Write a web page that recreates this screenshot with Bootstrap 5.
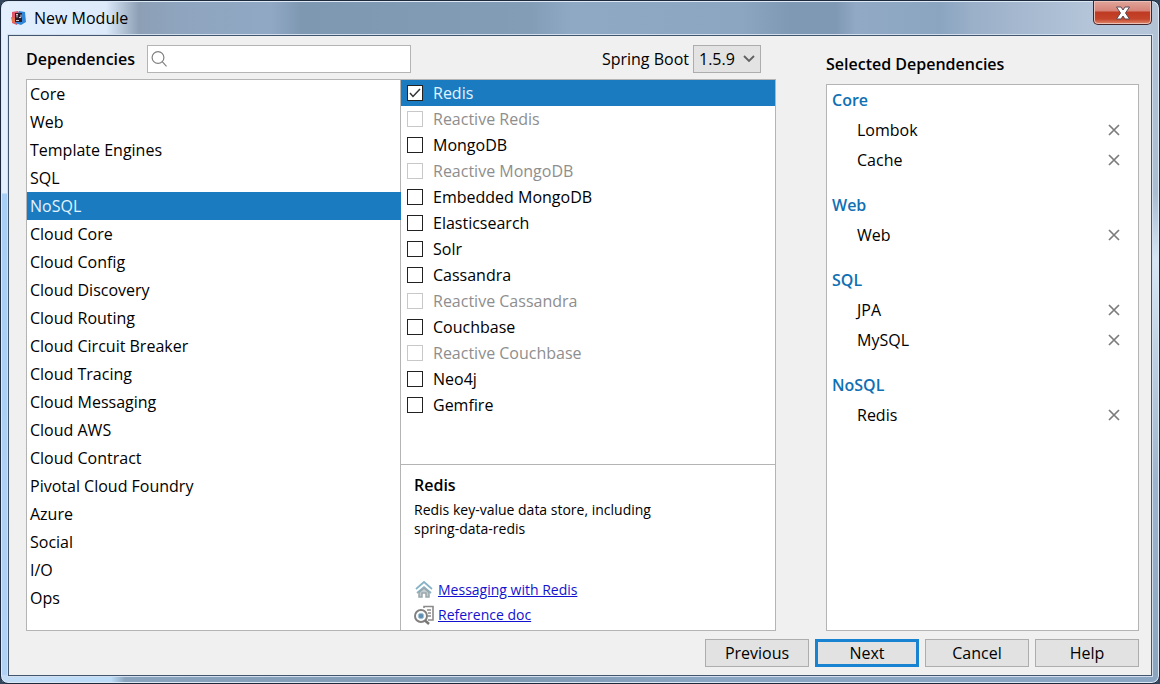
<!DOCTYPE html>
<html lang="en">
<head>
<meta charset="utf-8">
<meta name="viewport" content="width=device-width, initial-scale=1">
<title>New Module</title>
<link rel="stylesheet" href="https://cdn.jsdelivr.net/npm/bootstrap@5.3.0/dist/css/bootstrap.min.css">
<style>
:root { --line: #b4b4b4; --pick: #1a7bc0; }
body { font-family: "Open Sans", "Noto Sans", sans-serif; font-size: 16px; line-height: 20px; color: #000; background: #34465c; }
.strong-text { font-weight: 600; }
.window {
  border: 1px solid #1d2a3e; border-radius: 8px; padding: 0 7px 7px;
  box-shadow: inset 0 0 0 1px #dce8f4;
  background:
    linear-gradient(90deg, #c3dcf6, #bcdcf8 110px, #8ba4be 124px, #7f99b3 500px, #8ba6c2 700px, #8ba6c2) bottom / 100% 8px no-repeat,
    linear-gradient(#e4f0fd 192px, #a8cff5 193px, #b2d2f4) left / 8px 100% no-repeat,
    linear-gradient(#b4c4d6, #a9bdd2 192px, #d6e6f5 260px, #9db5cc 480px, #8aa4be) right / 8px 100% no-repeat,
    linear-gradient(90deg, #e3effd, #dceafa 105px, #8c9fb5 138px, #8fa5bf 180px, #90a8c4 270px, #7f98b2 300px, #839db7 530px, #8fa8c4 570px, #8ca6c2 740px, #7f98b3 790px, #7f98b3 835px, #91a9c4 855px, #8ba5c1 940px, #9aafc8 970px, #b4c5d9 1090px, #b4c5d9);
}
.title-bar { height: 34px; padding-left: 3px; }
.title-bar .caption { margin-left: 7px; }
.close-win {
  width: 59px; height: 24px; border: 1px solid #43242b; border-top: 0; border-radius: 0 0 5px 5px;
  background: linear-gradient(#e0a59b, #d68377 10px, #bf3a22 11px, #c4442a 18px, #e08a6e);
  box-shadow: inset 0 0 0 1px #ecc0b6;
}
.client { border: 1px solid #43566f; background: #f0f0f0; padding: 9px 12px 8px 17px; box-shadow: 0 0 0 1px #d3dfec; }
.pane-main { flex: 750 1 0; min-width: 0; }
.pane-side { flex: 313 1 0; min-width: 0; }
.panes { gap: 50px; }
.tools { height: 28px; margin-bottom: 6px; }
.tools .find-label { width: 121px; }
.search-box { width: 264px; }
.search-box svg { left: 4px; top: 6px; }
.search-box .form-control { height: 28px; border: 1px solid var(--line); border-radius: 0; padding: 0 4px 0 26px; font-size: 16px; }
.version { width: 68px; height: 28px; margin-right: 15px; padding: 0 18px 0 5px; font-size: 16px; line-height: 20px; color: #000; border: 1px solid #adadad; border-radius: 0; background-color: #e3e3e3; background-position: right 5px center; background-size: 12px 12px;
  background-image: url("data:image/svg+xml,%3csvg xmlns='http://www.w3.org/2000/svg' viewBox='0 0 12 12'%3e%3cpath fill='none' stroke='%23606060' stroke-width='1.8' d='M1 3l5 5 5-5'/%3e%3c/svg%3e"); }
.sheet { border: 1px solid var(--line); background: #fff; }
.split > * { flex: 1 1 0; min-width: 0; }
.split > * + * { box-shadow: -1px 0 var(--line); }
.groups .list-group-item { height: 28px; border: 0; padding: 4px 3px; color: #000; background: none; }
.groups .list-group-item.active { background: var(--pick); color: #e2f3ff; margin: 0; }
.option { height: 26px; padding-left: 6px; margin: 0; }
.option .form-check-input { float: none; width: 16px; height: 16px; margin: 0 10px 0 0; border: 1px solid #222; border-radius: 0; flex: none; opacity: 1; background-color: #fff; }
.option .form-check-input:checked { background-size: 14px 14px; background-image: url("data:image/svg+xml,%3csvg xmlns='http://www.w3.org/2000/svg' viewBox='0 0 14 14'%3e%3cpath fill='none' stroke='%23333' stroke-width='1.5' d='M2 7l3 3.5L12 3'/%3e%3c/svg%3e"); }
.option .form-check-input:disabled { border-color: #c8c8c8; }
.option .form-check-input:disabled ~ .form-check-label { color: #8e8e8e; opacity: 1; }
.option.picked { background: var(--pick); color: #e2f3ff; }
.about { height: 166px; border-top: 1px solid var(--line); padding: 10px 13px 3px; }
.about p { max-width: 270px; font-size: 14px; line-height: 19px; margin: 5px 0 0; }
.about a { font-size: 14px; color: #1212d0; }
.about .doc-link { height: 25px; gap: 4px; }
.side-title { height: 20px; margin: 9px 0 10px; }
.side-title, .tools label, .about h2 { font-size: 16px; line-height: 20px; }
.chosen { padding-bottom: 15px; }
.chosen h3 { height: 30px; margin: 0; padding: 5px; font-size: 16px; line-height: 20px; color: #0f70b4; }
.chosen li { height: 30px; padding: 0 17px 0 30px; }
.drop { width: 14px; height: 14px; }
.actions { gap: 6px; margin-top: 8px; }
.actions .btn { width: 104px; height: 28px; padding: 0; border: 1px solid #adadad; border-radius: 0; background: #e2e2e2; color: #000; font-size: 16px; line-height: 20px; }
.actions .btn.main-step { border: 3px solid #1883d0; }
</style>
</head>
<body>
<div class="window d-flex flex-column min-vh-100">
  <header class="title-bar d-flex align-items-center">
    <svg width="16" height="16" viewBox="0 0 16 16" aria-hidden="true">
      <path fill="#e0566a" d="M1 2l6-1 3 5-4 9-5-2z"/><path fill="#2f86d8" d="M8 1l6 1 1 10-5 3-6-2z"/><path fill="#e8704a" d="M0 7l4 1v5l-3-1z"/>
      <path fill="#2a1c28" d="M4 3h7v9H4z"/><path stroke="#d8ccd4" fill="none" d="M5 4.500h2M6 4.500v3M8 7.500h2v-3M5 10.500h3"/>
    </svg>
    <span class="caption">New Module</span>
    <button class="close-win ms-auto p-0 align-self-start d-flex align-items-center justify-content-center" type="button" aria-label="Close">
      <svg width="16" height="14" viewBox="0 0 16 14"><path d="M1.500 1h4.500L8 4l2-3h4.500l-4 6 4 6H10L8 10l-2 3H1.500l4-6z" fill="#fff" stroke="#5c4a55"/></svg>
    </button>
  </header>

  <main class="client d-flex flex-column flex-grow-1">
    <div class="panes d-flex flex-grow-1">
      <section class="pane-main d-flex flex-column">
        <div class="tools d-flex align-items-center">
          <label class="find-label strong-text" for="find">Dependencies</label>
          <div class="search-box position-relative">
            <svg class="position-absolute" width="16" height="16" viewBox="0 0 16 16" fill="none" stroke="#808080" stroke-width="1.200" aria-hidden="true"><circle cx="7" cy="6.500" r="5.900"/><path d="M11.200 10.700l4.300 4.600"/></svg>
            <input class="form-control" id="find" type="text">
          </div>
          <label class="ms-auto me-1" for="boot">Spring Boot</label>
          <select class="version form-select" id="boot"><option>1.5.9</option></select>
        </div>
        <div class="sheet split d-flex flex-grow-1">
          <div class="groups list-group list-group-flush">
            <a href="#" class="list-group-item">Core</a>
            <a href="#" class="list-group-item">Web</a>
            <a href="#" class="list-group-item">Template Engines</a>
            <a href="#" class="list-group-item">SQL</a>
            <a href="#" class="list-group-item active">NoSQL</a>
            <a href="#" class="list-group-item">Cloud Core</a>
            <a href="#" class="list-group-item">Cloud Config</a>
            <a href="#" class="list-group-item">Cloud Discovery</a>
            <a href="#" class="list-group-item">Cloud Routing</a>
            <a href="#" class="list-group-item">Cloud Circuit Breaker</a>
            <a href="#" class="list-group-item">Cloud Tracing</a>
            <a href="#" class="list-group-item">Cloud Messaging</a>
            <a href="#" class="list-group-item">Cloud AWS</a>
            <a href="#" class="list-group-item">Cloud Contract</a>
            <a href="#" class="list-group-item">Pivotal Cloud Foundry</a>
            <a href="#" class="list-group-item">Azure</a>
            <a href="#" class="list-group-item">Social</a>
            <a href="#" class="list-group-item">I/O</a>
            <a href="#" class="list-group-item">Ops</a>
          </div>
          <div class="d-flex flex-column">
            <div class="flex-grow-1">
              <div class="option picked form-check d-flex align-items-center"><input class="form-check-input" type="checkbox" id="o1" checked><label class="form-check-label" for="o1">Redis</label></div>
              <div class="option form-check d-flex align-items-center"><input class="form-check-input" type="checkbox" id="o2" disabled><label class="form-check-label" for="o2">Reactive Redis</label></div>
              <div class="option form-check d-flex align-items-center"><input class="form-check-input" type="checkbox" id="o3"><label class="form-check-label" for="o3">MongoDB</label></div>
              <div class="option form-check d-flex align-items-center"><input class="form-check-input" type="checkbox" id="o4" disabled><label class="form-check-label" for="o4">Reactive MongoDB</label></div>
              <div class="option form-check d-flex align-items-center"><input class="form-check-input" type="checkbox" id="o5"><label class="form-check-label" for="o5">Embedded MongoDB</label></div>
              <div class="option form-check d-flex align-items-center"><input class="form-check-input" type="checkbox" id="o6"><label class="form-check-label" for="o6">Elasticsearch</label></div>
              <div class="option form-check d-flex align-items-center"><input class="form-check-input" type="checkbox" id="o7"><label class="form-check-label" for="o7">Solr</label></div>
              <div class="option form-check d-flex align-items-center"><input class="form-check-input" type="checkbox" id="o8"><label class="form-check-label" for="o8">Cassandra</label></div>
              <div class="option form-check d-flex align-items-center"><input class="form-check-input" type="checkbox" id="o9" disabled><label class="form-check-label" for="o9">Reactive Cassandra</label></div>
              <div class="option form-check d-flex align-items-center"><input class="form-check-input" type="checkbox" id="o10"><label class="form-check-label" for="o10">Couchbase</label></div>
              <div class="option form-check d-flex align-items-center"><input class="form-check-input" type="checkbox" id="o11" disabled><label class="form-check-label" for="o11">Reactive Couchbase</label></div>
              <div class="option form-check d-flex align-items-center"><input class="form-check-input" type="checkbox" id="o12"><label class="form-check-label" for="o12">Neo4j</label></div>
              <div class="option form-check d-flex align-items-center"><input class="form-check-input" type="checkbox" id="o13"><label class="form-check-label" for="o13">Gemfire</label></div>
            </div>
            <div class="about d-flex flex-column">
              <h2 class="strong-text m-0">Redis</h2>
              <p>Redis key-value data store, including spring-data-redis</p>
              <div class="mt-auto">
                <div class="doc-link d-flex align-items-center">
                  <svg width="20" height="20" viewBox="0 0 20 20" fill="none" aria-hidden="true"><path d="M2 9l8-7 8 7M3 13l7-6 7 6" stroke="#86b4c6" stroke-width="1.700"/><path d="M5 17v-4.500L10 8l5 4.500V17h-3v-4H8v4z" fill="#c3ccd0" stroke="#9aa6ab" stroke-width="1.500"/></svg>
                  <a href="#">Messaging with Redis</a>
                </div>
                <div class="doc-link d-flex align-items-center">
                  <svg width="20" height="20" viewBox="0 0 20 20" fill="none" aria-hidden="true"><path d="M10 3V1.500h9V15h-5M13 5h4M14 8h3M14 11h3" stroke="#8a8a8a" stroke-width="1.600"/><circle cx="7" cy="11" r="6" fill="#fff" stroke="#808080" stroke-width="2"/><circle cx="7" cy="11" r="2.800" fill="#5d8db0" stroke="#a4c4d8"/><path d="M11 15.500l4 3.500" stroke="#777" stroke-width="2.500"/></svg>
                  <a href="#">Reference doc</a>
                </div>
              </div>
            </div>
          </div>
        </div>
      </section>

      <section class="pane-side d-flex flex-column">
        <h2 class="side-title strong-text">Selected Dependencies</h2>
        <div class="sheet flex-grow-1">
          <div class="chosen"><h3 class="strong-text">Core</h3>
            <ul class="list-unstyled m-0">
              <li class="d-flex align-items-center justify-content-between">Lombok<button type="button" class="drop btn p-0 border-0 d-flex" aria-label="Remove Lombok"><svg width="14" height="14" viewBox="0 0 14 14" stroke="#7c7c7c" stroke-width="1.700"><path d="M2 2l10 10M12 2L2 12"/></svg></button></li>
              <li class="d-flex align-items-center justify-content-between">Cache<button type="button" class="drop btn p-0 border-0 d-flex" aria-label="Remove Cache"><svg width="14" height="14" viewBox="0 0 14 14" stroke="#7c7c7c" stroke-width="1.700"><path d="M2 2l10 10M12 2L2 12"/></svg></button></li>
            </ul></div>
          <div class="chosen"><h3 class="strong-text">Web</h3>
            <ul class="list-unstyled m-0">
              <li class="d-flex align-items-center justify-content-between">Web<button type="button" class="drop btn p-0 border-0 d-flex" aria-label="Remove Web"><svg width="14" height="14" viewBox="0 0 14 14" stroke="#7c7c7c" stroke-width="1.700"><path d="M2 2l10 10M12 2L2 12"/></svg></button></li>
            </ul></div>
          <div class="chosen"><h3 class="strong-text">SQL</h3>
            <ul class="list-unstyled m-0">
              <li class="d-flex align-items-center justify-content-between">JPA<button type="button" class="drop btn p-0 border-0 d-flex" aria-label="Remove JPA"><svg width="14" height="14" viewBox="0 0 14 14" stroke="#7c7c7c" stroke-width="1.700"><path d="M2 2l10 10M12 2L2 12"/></svg></button></li>
              <li class="d-flex align-items-center justify-content-between">MySQL<button type="button" class="drop btn p-0 border-0 d-flex" aria-label="Remove MySQL"><svg width="14" height="14" viewBox="0 0 14 14" stroke="#7c7c7c" stroke-width="1.700"><path d="M2 2l10 10M12 2L2 12"/></svg></button></li>
            </ul></div>
          <div class="chosen"><h3 class="strong-text">NoSQL</h3>
            <ul class="list-unstyled m-0">
              <li class="d-flex align-items-center justify-content-between">Redis<button type="button" class="drop btn p-0 border-0 d-flex" aria-label="Remove Redis"><svg width="14" height="14" viewBox="0 0 14 14" stroke="#7c7c7c" stroke-width="1.700"><path d="M2 2l10 10M12 2L2 12"/></svg></button></li>
            </ul></div>
        </div>
      </section>
    </div>
    <footer class="actions d-flex justify-content-end">
      <button class="btn" type="button">Previous</button>
      <button class="btn main-step" type="button">Next</button>
      <button class="btn" type="button">Cancel</button>
      <button class="btn" type="button">Help</button>
    </footer>
  </main>
</div>
<script src="https://cdn.jsdelivr.net/npm/bootstrap@5.3.0/dist/js/bootstrap.bundle.min.js"></script>
</body>
</html>
